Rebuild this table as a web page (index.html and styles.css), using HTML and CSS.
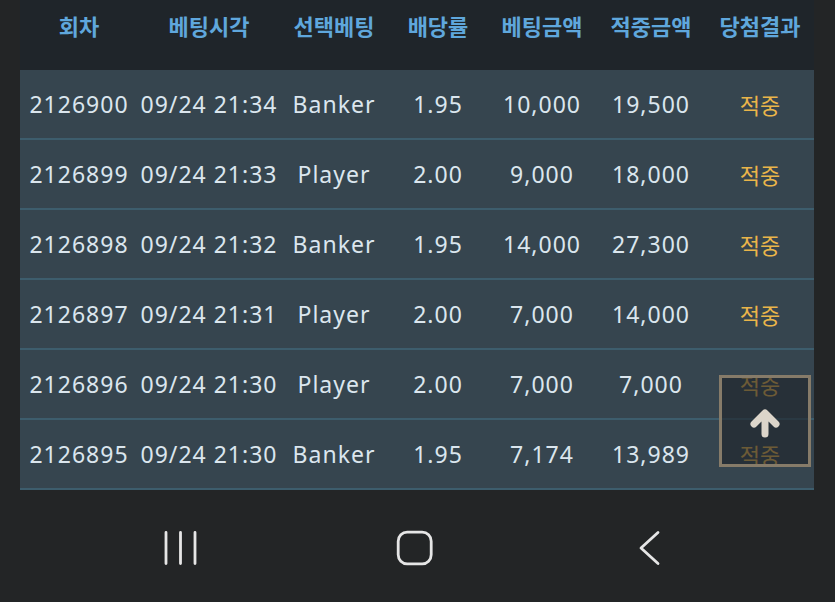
FILE: index.html
```html
<!DOCTYPE html>
<html lang="ko">
<head>
    <meta charset="UTF-8">
    <meta name="viewport" content="width=device-width, initial-scale=1.0">
    <title>베팅내역</title>
    <link rel="stylesheet" href="styles.css">
</head>
<body>
    <div class="page">
        <table class="bet-table">
            <colgroup>
                <col class="c-round">
                <col class="c-time">
                <col class="c-pick">
                <col class="c-odds">
                <col class="c-bet">
                <col class="c-win">
                <col class="c-result">
            </colgroup>
            <thead>
                <tr>
                    <th>회차</th>
                    <th>베팅시각</th>
                    <th>선택베팅</th>
                    <th>배당률</th>
                    <th>베팅금액</th>
                    <th>적중금액</th>
                    <th>당첨결과</th>
                </tr>
            </thead>
            <tbody>
                <tr>
                    <td>2126900</td><td>09/24 21:34</td><td>Banker</td><td>1.95</td><td>10,000</td><td>19,500</td><td class="hit">적중</td>
                </tr>
                <tr>
                    <td>2126899</td><td>09/24 21:33</td><td>Player</td><td>2.00</td><td>9,000</td><td>18,000</td><td class="hit">적중</td>
                </tr>
                <tr>
                    <td>2126898</td><td>09/24 21:32</td><td>Banker</td><td>1.95</td><td>14,000</td><td>27,300</td><td class="hit">적중</td>
                </tr>
                <tr>
                    <td>2126897</td><td>09/24 21:31</td><td>Player</td><td>2.00</td><td>7,000</td><td>14,000</td><td class="hit">적중</td>
                </tr>
                <tr>
                    <td>2126896</td><td>09/24 21:30</td><td>Player</td><td>2.00</td><td>7,000</td><td>7,000</td><td class="hit">적중</td>
                </tr>
                <tr>
                    <td>2126895</td><td>09/24 21:30</td><td>Banker</td><td>1.95</td><td>7,174</td><td>13,989</td><td class="hit">적중</td>
                </tr>
            </tbody>
        </table>

        <nav class="navbar">
            <svg class="nav-icon" width="40" height="40" viewBox="0 0 40 40">
                <path d="M6 4.5 V35.5 M20.5 4.5 V35.5 M35 4.5 V35.5" stroke="#e6e6e6" stroke-width="2.8" stroke-linecap="round" fill="none"/>
            </svg>
            <svg class="nav-icon" width="40" height="40" viewBox="0 0 40 40">
                <rect x="3.2" y="4.2" width="33" height="31.6" rx="9" stroke="#e6e6e6" stroke-width="2.8" fill="none"/>
            </svg>
            <svg class="nav-icon" width="40" height="40" viewBox="0 0 40 40">
                <path d="M28 4.5 L11 20 L28 35.5" stroke="#e6e6e6" stroke-width="2.8" stroke-linecap="round" stroke-linejoin="round" fill="none"/>
            </svg>
        </nav>
    </div>

    <a class="to-top" href="#">
        <svg width="40" height="40" viewBox="0 0 40 40">
            <path d="M20 33 V14 M9 23 L20 12 L31 23" stroke="#dcd5ca" stroke-width="7" stroke-linecap="round" stroke-linejoin="round" fill="none"/>
        </svg>
    </a>
</body>
</html>
```

FILE: styles.css
```css
body {
    margin: 0;
    background-color: #232526;
    font-family: 'Noto Sans', 'Noto Sans CJK KR', sans-serif;
}
.page {
    width: 835px;
    height: 602px;
    overflow: hidden;
}
.bet-table {
    margin-left: 20px;
    width: 794px;
    border-collapse: collapse;
    table-layout: fixed;
}
.c-round { width: 118px; }
.c-time { width: 142px; }
.c-pick { width: 108px; }
.c-odds { width: 100px; }
.c-bet { width: 108px; }
.c-win { width: 110px; }
.c-result { width: 108px; }

th {
    height: 50px;
    padding: 0 0 20px;
    background-color: #1f252a;
    color: #5fa7dc;
    font-family: 'Noto Sans CJK KR', sans-serif;
    font-size: 22px;
    font-weight: 700;
    text-align: center;
    white-space: nowrap;
}
td {
    height: 68px;
    padding: 0;
    background-color: #36454f;
    border-bottom: 2px solid #3d5d6d;
    color: #dbe6ee;
    font-size: 23px;
    text-align: center;
    white-space: nowrap;
    letter-spacing: 1px;
}
td.hit {
    color: #eab54a;
    font-family: 'Noto Sans CJK KR', sans-serif;
    font-size: 22px;
    letter-spacing: 0;
}
.navbar {
    height: 112px;
    box-sizing: border-box;
    display: grid;
    grid-template-columns: 40px 40px 40px;
    column-gap: 195px;
    align-items: start;
    padding: 38px 0 0 160px;
}
.nav-icon {
    display: block;
}
.to-top {
    position: fixed;
    left: 719px;
    top: 375px;
    width: 86px;
    height: 86px;
    border: 3px solid #867b69;
    background-color: rgba(30, 36, 42, 0.62);
    display: flex;
    align-items: center;
    justify-content: center;
}
```
